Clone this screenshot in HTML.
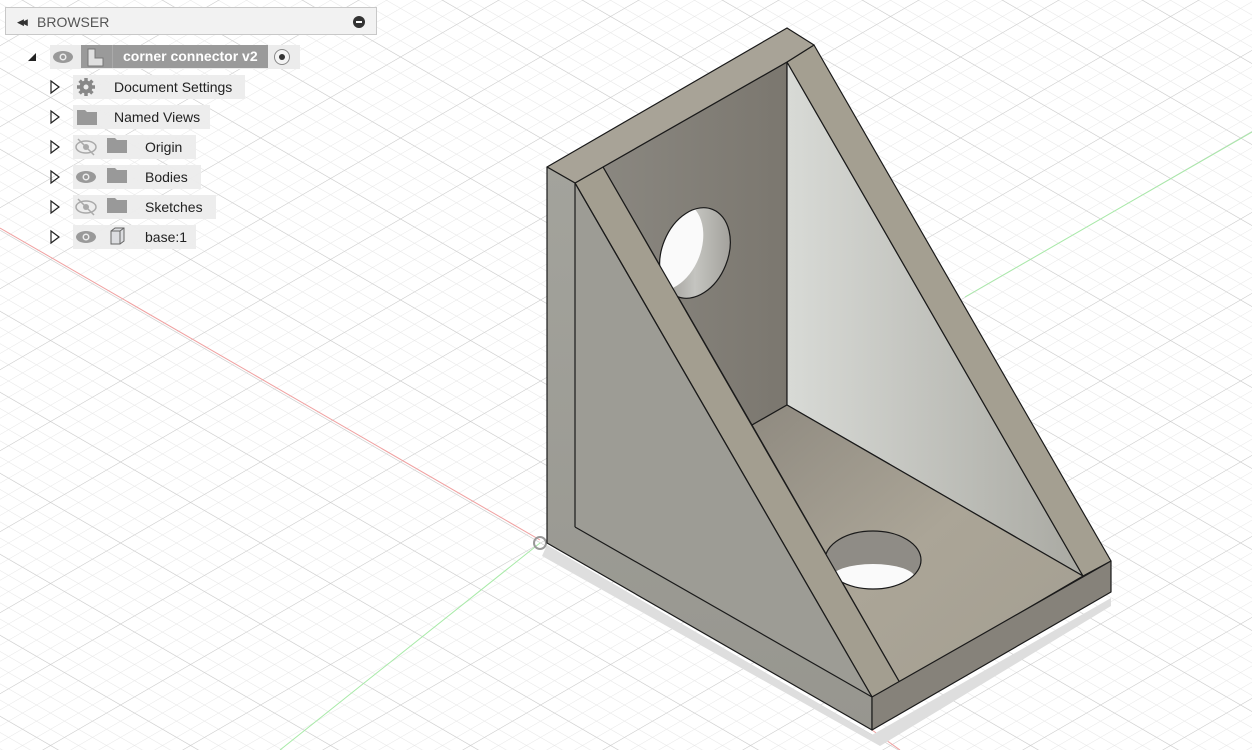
<!DOCTYPE html>
<html><head><style>
body{margin:0;width:1252px;height:750px;overflow:hidden;background:#fff;font-family:"Liberation Sans",sans-serif;position:relative}
svg.bg{position:absolute;left:0;top:0}
.panel{position:absolute;left:5px;top:7px;width:372px;height:28px;background:#f2f2f2;border:1px solid #c8c8c8;box-sizing:border-box}
.panel .t{position:absolute;left:31px;top:6px;font-size:14px;color:#555}
.panel .dd{position:absolute;left:11px;top:9px;font-size:9px;color:#333;letter-spacing:-3px}
.panel .mn{position:absolute;right:11px;top:8px;width:12px;height:12px;border-radius:50%;background:#333}
.panel .mn:after{content:"";position:absolute;left:3px;top:5px;width:6px;height:2px;background:#fff}
.row{position:absolute;height:24px;background:rgba(236,236,236,.95);font-size:14px;color:#222;line-height:24px}
</style></head><body>
<svg class="bg" width="1252" height="750">
<defs>
<pattern id="g" width="10" height="10" patternUnits="userSpaceOnUse" patternTransform="matrix(1.4,0.81,1.4,-0.81,540,543)">
<path d="M0 0H10M0 0V10" stroke="#e6e6e6" stroke-width="0.7" fill="none"/>
</pattern>
<pattern id="G" width="50" height="50" patternUnits="userSpaceOnUse" patternTransform="matrix(1.4,0.81,1.4,-0.81,540,543)">
<path d="M0 0H50M0 0V50" stroke="#cacaca" stroke-width="0.7" fill="none"/>
</pattern>
<linearGradient id="bw" x1="0" y1="0" x2="1" y2="0"><stop offset="0" stop-color="#8a8780"/><stop offset="1" stop-color="#7b776f"/></linearGradient>
<linearGradient id="rw" x1="0" y1="0" x2="1" y2="0"><stop offset="0" stop-color="#d8dad6"/><stop offset="1" stop-color="#a9a9a2"/></linearGradient>
<linearGradient id="lf" x1="0" y1="0" x2="0" y2="1"><stop offset="0" stop-color="#a3a39c"/><stop offset="1" stop-color="#97968f"/></linearGradient>
<linearGradient id="fl" x1="0" y1="0" x2="1" y2="1"><stop offset="0" stop-color="#8f8a80"/><stop offset=".5" stop-color="#aba597"/><stop offset="1" stop-color="#a39e91"/></linearGradient>
<linearGradient id="bore" x1="0" y1="0" x2="1" y2="0"><stop offset="0" stop-color="#8d8a84"/><stop offset=".5" stop-color="#c4c4c0"/><stop offset="1" stop-color="#9a9892"/></linearGradient>
<clipPath id="h1"><ellipse cx="695" cy="253" rx="33" ry="47" transform="rotate(22 695 253)"/></clipPath>
<clipPath id="h2"><ellipse cx="873" cy="560" rx="48" ry="29"/></clipPath>
</defs>
<rect width="1252" height="750" fill="#fff"/>
<rect width="1252" height="750" fill="url(#g)"/>
<rect width="1252" height="750" fill="url(#G)"/>
<line x1="0" y1="228" x2="540" y2="540" stroke="#f0a0a0" stroke-width="1"/>
<line x1="540" y1="543" x2="280" y2="750" stroke="#a8eaa8" stroke-width="1"/>
<line x1="965" y1="297" x2="1252" y2="132" stroke="#a8eaa8" stroke-width="1"/>
<line x1="872" y1="730" x2="900" y2="750" stroke="#f0a0a0" stroke-width="1"/>
<polygon points="547,545 872,735 1111,598 1111,606 880,746 542,556" fill="#dedede"/>
<circle cx="540" cy="543" r="6" fill="none" stroke="#999" stroke-width="2"/>
<g stroke="#1a1a1a" stroke-width="1.2" stroke-linejoin="round">
<polygon points="603,167 787,62 787,405 752,425" fill="url(#bw)"/>
<polygon points="787,62 1083,576 787,405" fill="url(#rw)"/>
<polygon points="752,425 787,405 1083,576 900,683" fill="url(#fl)"/>
<!-- back hole -->
<g clip-path="url(#h1)" stroke="none">
<rect x="650" y="200" width="90" height="110" fill="url(#bore)"/>
<ellipse cx="668" cy="246" rx="33" ry="47" transform="rotate(22 668 246)" fill="#fafafa"/>
</g>
<ellipse cx="695" cy="253" rx="33" ry="47" transform="rotate(22 695 253)" fill="none"/>
<!-- floor hole -->
<g clip-path="url(#h2)" stroke="none">
<rect x="820" y="525" width="110" height="70" fill="#8f8c86"/>
<ellipse cx="873" cy="578" rx="42" ry="14" fill="#fafafa"/>
</g>
<ellipse cx="873" cy="560" rx="48" ry="29" fill="none"/>
<polygon points="575,183 603,167 900,683 872,697" fill="#a39e90"/>
<polygon points="814,45 1111,561 1083,576 787,62" fill="#a49f91"/>
<polygon points="547,167 787,28 814,45 787,62 603,167 575,183" fill="#a8a397"/>
<polygon points="547,167 575,183 872,697 872,730 547,543" fill="url(#lf)"/>
<polygon points="575,185 575,527 872,697" fill="#9d9c95" stroke="none"/>
<line x1="575" y1="183" x2="575" y2="527"/><line x1="575" y1="527" x2="872" y2="697"/><line x1="575" y1="183" x2="872" y2="697"/>
<polygon points="872,697 1111,561 1111,592 872,730" fill="#86827a"/>
</g>
</svg>

<div class="panel"><span class="dd">◀◀</span><span class="t">BROWSER</span><span class="mn"></span></div>

<svg style="position:absolute;left:0;top:40px" width="380" height="210">
<polygon points="28,21 36,13 36,21" fill="#222"/>
<g fill="none" stroke="#222" stroke-width="1.2">
<polygon points="51,41 59,47 51,53"/><polygon points="51,71 59,77 51,83"/><polygon points="51,101 59,107 51,113"/><polygon points="51,131 59,137 51,143"/><polygon points="51,161 59,167 51,173"/><polygon points="51,191 59,197 51,203"/>
</g>
</svg>

<div class="row" style="left:50px;top:45px;width:250px;background:#ececec"></div>
<svg style="position:absolute;left:52px;top:49px" width="22" height="16"><ellipse cx="11" cy="8" rx="10" ry="6" fill="#999"/><circle cx="11" cy="8" r="3.5" fill="#ececec"/><circle cx="11" cy="8" r="2" fill="#999"/></svg>
<div style="position:absolute;left:81px;top:45px;width:187px;height:23px;background:#9a9a9a"></div>
<div style="position:absolute;left:112px;top:45px;width:1px;height:23px;background:#aaa"></div>
<svg style="position:absolute;left:86px;top:47px" width="20" height="20"><path d="M2 2h7v9h8v8H2z" fill="#e0e0e0" stroke="#777"/></svg>
<div style="position:absolute;left:123px;top:45px;line-height:23px;font-size:14px;font-weight:bold;color:#fff">corner connector v2</div>
<svg style="position:absolute;left:273px;top:48px" width="18" height="18"><circle cx="9" cy="9" r="7.5" fill="#f4f4f4" stroke="#888"/><circle cx="9" cy="9" r="3" fill="#333"/></svg>

<div class="row" style="left:73px;top:75px;width:172px"><span style="position:absolute;left:41px">Document Settings</span></div>
<svg style="position:absolute;left:76px;top:77px" width="20" height="20"><g fill="#888"><circle cx="10" cy="10" r="6.5"/><g stroke="#888" stroke-width="3.5"><line x1="10" y1="1" x2="10" y2="19"/><line x1="1" y1="10" x2="19" y2="10"/><line x1="3.6" y1="3.6" x2="16.4" y2="16.4"/><line x1="16.4" y1="3.6" x2="3.6" y2="16.4"/></g></g><circle cx="10" cy="10" r="2.5" fill="#ececec"/></svg>

<div class="row" style="left:73px;top:105px;width:137px"><span style="position:absolute;left:41px">Named Views</span></div>
<svg style="position:absolute;left:76px;top:108px" width="22" height="18"><path d="M1 2h8l2 2h10v13H1z" fill="#999"/></svg>

<div class="row" style="left:73px;top:135px;width:123px"><span style="position:absolute;left:72px">Origin</span></div>
<div class="row" style="left:73px;top:165px;width:128px"><span style="position:absolute;left:72px">Bodies</span></div>
<div class="row" style="left:73px;top:195px;width:143px"><span style="position:absolute;left:72px">Sketches</span></div>
<div class="row" style="left:73px;top:225px;width:123px"><span style="position:absolute;left:72px">base:1</span></div>

<svg style="position:absolute;left:74px;top:135px" width="60" height="120">
<g>
<ellipse cx="12" cy="12" rx="10" ry="6" fill="none" stroke="#aaa" stroke-width="1.5"/><circle cx="12" cy="12" r="3" fill="#aaa"/><line x1="4" y1="4" x2="20" y2="20" stroke="#aaa" stroke-width="1.5"/>
<path d="M33 3h8l2 2h10v13H33z" fill="#999"/>
</g>
<g transform="translate(0,30)">
<ellipse cx="12" cy="12" rx="10" ry="6" fill="#999"/><circle cx="12" cy="12" r="3.5" fill="#ececec"/><circle cx="12" cy="12" r="2" fill="#999"/>
<path d="M33 3h8l2 2h10v13H33z" fill="#999"/>
</g>
<g transform="translate(0,60)">
<ellipse cx="12" cy="12" rx="10" ry="6" fill="none" stroke="#aaa" stroke-width="1.5"/><circle cx="12" cy="12" r="3" fill="#aaa"/><line x1="4" y1="4" x2="20" y2="20" stroke="#aaa" stroke-width="1.5"/>
<path d="M33 3h8l2 2h10v13H33z" fill="#999"/>
</g>
<g transform="translate(0,90)">
<ellipse cx="12" cy="12" rx="10" ry="6" fill="#999"/><circle cx="12" cy="12" r="3.5" fill="#ececec"/><circle cx="12" cy="12" r="2" fill="#999"/>
<path d="M37 6l4-3h9v13l-4 3h-9z" fill="#dcdde0" stroke="#666"/><path d="M37 6h9v13M46 6l4-3" fill="none" stroke="#666"/>
</g>
</svg>
</body></html>
